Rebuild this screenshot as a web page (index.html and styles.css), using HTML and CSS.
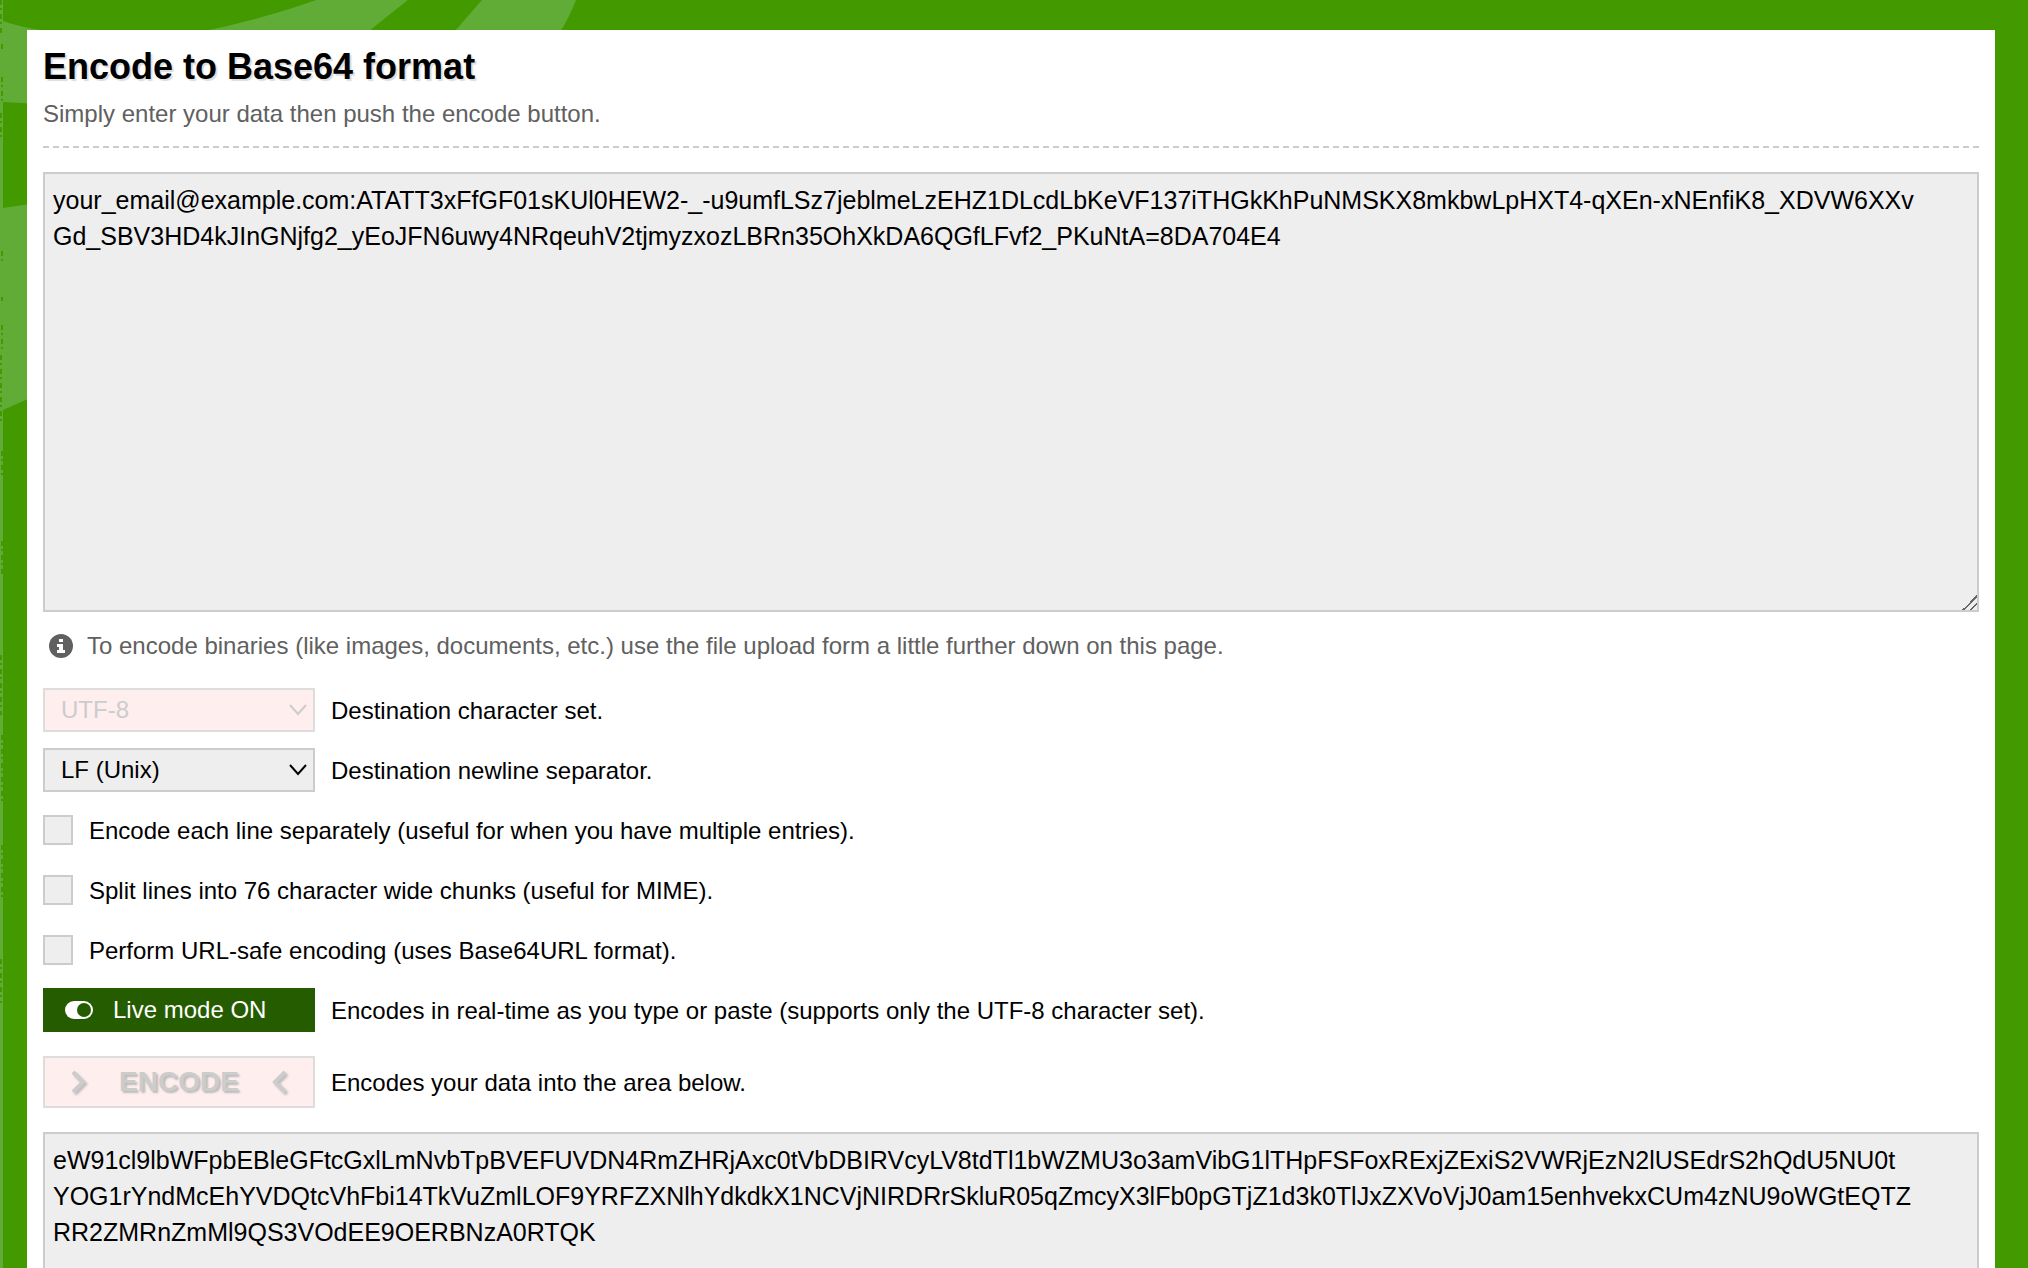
FILE: index.html
```html
<!DOCTYPE html>
<html lang="en">
<head>
    <meta charset="UTF-8">
    <meta name="viewport" content="width=device-width, initial-scale=1.0">
    <title>Base64 Encode</title>
    <link rel="stylesheet" href="styles.css">
</head>
<body>
    <svg class="swirl" aria-hidden="true">
        <path d="M200 32 Q266 18 316 0 H408 Q390 14 368 32 Z"/>
        <path d="M454 32 Q468 16 482 0 H576 Q570 16 560 32 Z"/>
        <path d="M3 21 Q16 26 40 30 V104 L3 102 Z"/>
        <path d="M3 208 L30 204 V398 L3 410 Z"/>
        <rect width="3" height="100%"/>
        <path class="marks" d="M1 0v36m1 8v7m0 26v26m-1 10v28m1 110v10m0 36v4m0 24v24m-1 6v66m1 30v24m0 66v34m-1 80v60m1 20v70m0 40v54m-1 60v44"/>
    </svg>

    <main>
        <h1>Encode to Base64 format</h1>
        <p class="intro">Simply enter your data then push the encode button.</p>

        <form>
            <textarea id="input" aria-label="Data to encode" spellcheck="false">your_email@example.com:ATATT3xFfGF01sKUl0HEW2-_-u9umfLSz7jeblmeLzEHZ1DLcdLbKeVF137iTHGkKhPuNMSKX8mkbwLpHXT4-qXEn-xNEnfiK8_XDVW6XXv
Gd_SBV3HD4kJInGNjfg2_yEoJFN6uwy4NRqeuhV2tjmyzxozLBRn35OhXkDA6QGfLFvf2_PKuNtA=8DA704E4</textarea>

            <p class="info">
                <svg width="24" height="24" viewBox="0 0 24 24" aria-hidden="true">
                    <circle cx="12" cy="12" r="12" fill="#606060"/>
                    <path fill="#fff" d="M10 5h4v3h-4zM8 10h6v6h2v3H8v-3h2v-3H8z"/>
                </svg>
                <span>To encode binaries (like images, documents, etc.) use the file upload form a little further down on this page.</span>
            </p>

            <div class="row">
                <span class="select">
                    <select id="charset" disabled>
                        <option>UTF-8</option>
                    </select>
                    <svg width="18" height="12" viewBox="0 0 18 12" aria-hidden="true"><path d="M1 1l8 9 8-9"/></svg>
                </span>
                <label for="charset">Destination character set.</label>
            </div>

            <div class="row">
                <span class="select">
                    <select id="separator">
                        <option>LF (Unix)</option>
                        <option>CRLF (Windows)</option>
                    </select>
                    <svg width="18" height="12" viewBox="0 0 18 12" aria-hidden="true"><path d="M1 1l8 9 8-9"/></svg>
                </span>
                <label for="separator">Destination newline separator.</label>
            </div>

            <div class="row">
                <input type="checkbox" id="lines">
                <label for="lines">Encode each line separately (useful for when you have multiple entries).</label>
            </div>

            <div class="row">
                <input type="checkbox" id="chunks">
                <label for="chunks">Split lines into 76 character wide chunks (useful for MIME).</label>
            </div>

            <div class="row">
                <input type="checkbox" id="urlsafe">
                <label for="urlsafe">Perform URL-safe encoding (uses Base64URL format).</label>
            </div>

            <div class="row">
                <button type="button" id="live" class="live">
                    <svg width="28" height="18" viewBox="0 0 28 18" aria-hidden="true">
                        <rect width="28" height="18" rx="9" fill="#fff"/>
                        <circle cx="19" cy="9" r="7" fill="#255c00"/>
                    </svg>
                    Live mode ON
                </button>
                <label for="live">Encodes in real-time as you type or paste (supports only the UTF-8 character set).</label>
            </div>

            <div class="row submit">
                <button type="submit" id="encode" class="encode" disabled>
                    <svg width="16" height="24" viewBox="0 0 16 24" aria-hidden="true"><path d="M2 2l10 10L2 22"/></svg>
                    ENCODE
                    <svg width="16" height="24" viewBox="0 0 16 24" aria-hidden="true"><path d="M14 2L4 12l10 10"/></svg>
                </button>
                <label for="encode">Encodes your data into the area below.</label>
            </div>

            <textarea id="output" aria-label="Encoded data" spellcheck="false" readonly>eW91cl9lbWFpbEBleGFtcGxlLmNvbTpBVEFUVDN4RmZHRjAxc0tVbDBIRVcyLV8tdTl1bWZMU3o3amVibG1lTHpFSFoxRExjZExiS2VWRjEzN2lUSEdrS2hQdU5NU0t
YOG1rYndMcEhYVDQtcVhFbi14TkVuZmlLOF9YRFZXNlhYdkdkX1NCVjNIRDRrSkluR05qZmcyX3lFb0pGTjZ1d3k0TlJxZXVoVjJ0am15enhvekxCUm4zNU9oWGtEQTZ
RR2ZMRnZmMl9QS3VOdEE9OERBNzA0RTQK</textarea>
        </form>
    </main>
</body>
</html>
```
FILE: styles.css
```css
* {
    box-sizing: border-box;
}

html {
    scrollbar-width: none;
}

body {
    margin: 0;
    padding: 30px 33px 0 27px;
    background: #429900;
    font-family: "Liberation Sans", Helvetica, Arial, sans-serif;
    font-size: 24px;
    line-height: 36px;
    color: #000;
}

    /* Decoration behind the page */
.swirl {
    position: fixed;
    top: 0;
    left: 0;
    z-index: -1;
    width: 600px;
    height: 100%;
    fill: #60ac37;
}

.swirl .marks {
    fill: none;
    stroke: #429900;
    stroke-width: 2;
    stroke-dasharray: 5 3 2 4;
}

main {
    background: #fff;
    padding: 16px;
}

h1 {
    margin: 0;
    font-size: 36px;
    line-height: 42px;
    text-shadow: 2px 2px 1px #ddd;
}

.intro {
    margin: 8px 0 24px;
    padding-bottom: 14px;
    border-bottom: 2px dashed #ccc;
    color: #606060;
}

textarea {
    display: block;
    width: 100%;
    height: 440px;
    padding: 8px;
    border: 2px solid #ccc;
    background: #eee;
    color: #000;
    font: inherit;
    font-size: 25px;
    word-break: break-all;
    resize: vertical;
    overflow: hidden;
}

textarea::-webkit-resizer {
    background: linear-gradient(135deg, transparent 50%, #666 50%, #666 58%, transparent 58%, transparent 75%, #666 75%, #666 83%, transparent 83%);
}

.info {
    display: flex;
    align-items: center;
    gap: 14px;
    margin: 16px 0 24px;
    padding-left: 6px;
    color: #606060;
}

.row {
    display: flex;
    align-items: center;
    gap: 16px;
    height: 44px;
    margin-bottom: 16px;
}

.row label {
    padding-top: 2px;
}

.select {
    position: relative;
}

.select svg {
    position: absolute;
    right: 8px;
    top: 16px;
    fill: none;
    stroke: #000;
    stroke-width: 2;
    pointer-events: none;
}

select, button {
    width: 272px;
    height: 44px;
    border: 2px solid #ccc;
    border-radius: 0;
    background: #eee;
    color: #000;
    font: inherit;
}

select {
    display: block;
    appearance: none;
    padding: 0 16px;
}

select:disabled, button:disabled {
    background: #fee;
    border-color: #ddd;
    color: #ccc;
    opacity: 1;
}

select:disabled + svg {
    stroke: #ccc;
}

input[type="checkbox"] {
    appearance: none;
    width: 30px;
    height: 30px;
    margin: 0;
    border: 2px solid #ccc;
    background: #eee;
}

.live {
    display: flex;
    align-items: center;
    gap: 20px;
    padding: 0 20px;
    border-color: #255c00;
    background: #255c00;
    color: #fff;
}

.submit {
    height: 52px;
    margin: 24px 0;
}

.encode {
    display: flex;
    align-items: center;
    justify-content: space-between;
    height: 52px;
    padding: 0 26px;
    font-size: 28px;
    font-weight: bold;
    text-shadow: 2px 2px 2px #bbb;
}

.encode svg {
    fill: none;
    stroke: #ccc;
    stroke-width: 4;
    filter: drop-shadow(2px 2px 1px #bbb);
}
```
